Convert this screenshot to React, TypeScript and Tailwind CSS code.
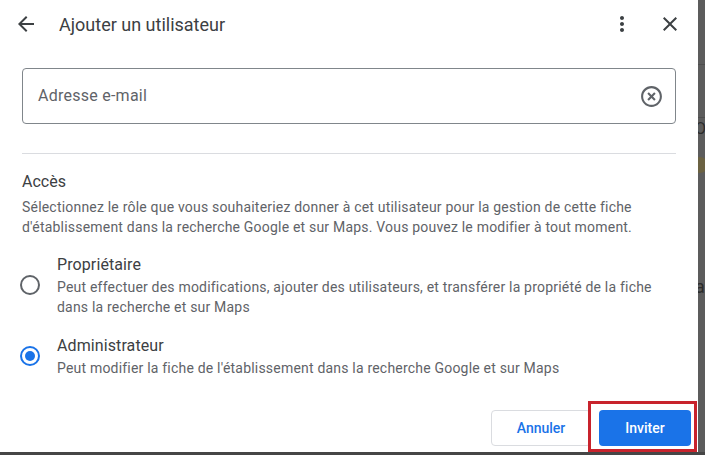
import React from "react";

const ArrowBack = () => (
  <svg width="24" height="24" viewBox="0 0 24 24" fill="#3c4043">
    <path d="M20 11H7.83l5.59-5.59L12 4l-8 8 8 8 1.41-1.41L7.83 13H20v-2z" />
  </svg>
);

const MoreVert = () => (
  <svg width="24" height="24" viewBox="0 0 24 24" fill="#3c4043">
    <path d="M12 8c1.1 0 2-.9 2-2s-.9-2-2-2-2 .9-2 2 .9 2 2 2zm0 2c-1.1 0-2 .9-2 2s.9 2 2 2 2-.9 2-2-.9-2-2-2zm0 6c-1.1 0-2 .9-2 2s.9 2 2 2 2-.9 2-2-.9-2-2-2z" />
  </svg>
);

const Close = () => (
  <svg width="24" height="24" viewBox="0 0 24 24" fill="#3c4043">
    <path d="M19 6.41 17.59 5 12 10.59 6.41 5 5 6.41 10.59 12 5 17.59 6.41 19 12 13.41 17.59 19 19 17.59 13.41 12z" />
  </svg>
);

const HighlightOff = () => (
  <svg width="25" height="25" viewBox="0 0 24 24" fill="#5f6368">
    <path d="M14.59 8 12 10.59 9.41 8 8 9.41 10.59 12 8 14.59 9.41 16 12 13.41 14.59 16 16 14.59 13.41 12 16 9.41 14.59 8zM12 2C6.47 2 2 6.47 2 12s4.47 10 10 10 10-4.47 10-10S17.53 2 12 2zm0 18c-4.41 0-8-3.59-8-8s3.59-8 8-8 8 3.59 8 8-3.59 8-8 8z" />
  </svg>
);

function Radio({ checked }: { checked: boolean }) {
  return checked ? (
    <div className="w-[20px] h-[20px] rounded-full border-2 border-[#1a73e8] flex items-center justify-center shrink-0">
      <div className="w-[10px] h-[10px] rounded-full bg-[#1a73e8]" />
    </div>
  ) : (
    <div className="w-[20px] h-[20px] rounded-full border-2 border-[#5f6368] shrink-0" />
  );
}

export default function App() {
  return (
    <div className="w-[705px] h-[455px] bg-[#5c5c5c] overflow-hidden flex flex-col font-['Roboto',sans-serif]">
      <div className="flex h-[452px]">
        <div className="relative w-[698px] h-[452px] bg-white flex flex-col shrink-0">
          {/* Header */}
          <div className="h-[48px] flex items-center pl-[14px] pr-[16px]">
            <ArrowBack />
            <div className="ml-[21px] flex-1 text-[18px] text-[#3c4043]">Ajouter un utilisateur</div>
            <MoreVert />
            <div className="ml-[24px]">
              <Close />
            </div>
          </div>

          {/* Input */}
          <div className="mt-[20px] mx-[22px] h-[56px] border border-[#80868b] rounded-[4px] flex items-center pl-[15px] pr-[11px]">
            <div className="flex-1 text-[16px] tracking-[0.25px] text-[#5f6368]">Adresse e-mail</div>
            <HighlightOff />
          </div>

          <div className="mt-[29px] mx-[22px] border-t border-[#dadce0]" />

          {/* Access */}
          <div className="mx-[22px] mt-[16px]">
            <div className="text-[16px] leading-6 text-[#3c4043]">Accès</div>
            <div className="mt-[3px] text-[14px] leading-5 tracking-[0.2px] text-[#5f6368]">
              Sélectionnez le rôle que vous souhaiteriez donner à cet utilisateur pour la gestion de cette fiche
              <br />
              d'établissement dans la recherche Google et sur Maps. Vous pouvez le modifier à tout moment.
            </div>
          </div>

          <div className="mt-[16px] ml-[20px] mr-[22px] flex items-center gap-[17px]">
            <Radio checked={false} />
            <div>
              <div className="text-[16px] leading-6 tracking-[0.1px] text-[#3c4043]">Propriétaire</div>
              <div className="text-[14px] leading-5 tracking-[0.2px] text-[#5f6368]">
                Peut effectuer des modifications, ajouter des utilisateurs, et transférer la propriété de la fiche
                <br />
                dans la recherche et sur Maps
              </div>
            </div>
          </div>

          <div className="mt-[17px] ml-[20px] mr-[22px] flex items-center gap-[17px]">
            <Radio checked={true} />
            <div>
              <div className="text-[16px] leading-6 tracking-[0.1px] text-[#3c4043]">Administrateur</div>
              <div className="text-[14px] leading-5 tracking-[0.2px] text-[#5f6368]">
                Peut modifier la fiche de l'établissement dans la recherche Google et sur Maps
              </div>
            </div>
          </div>

          {/* Buttons */}
          <div className="mt-auto pb-[6px] pr-[7px] flex justify-end gap-[8px]">
            <button className="w-[100px] h-[36px] border border-[#dadce0] rounded-[4px] text-[14px] font-medium text-[#1a73e8] bg-white">
              Annuler
            </button>
            <button className="w-[92px] h-[36px] rounded-[4px] text-[14px] font-medium text-white bg-[#1a73e8]">
              Inviter
            </button>
          </div>

          {/* red highlight annotation */}
          <div className="absolute left-[588px] top-[401px] w-[109px] h-[51px] border-[3px] border-[#c8232c]" />
        </div>

        {/* backdrop strip */}
        <div className="flex-1 flex flex-col bg-[#5c5c5c] overflow-hidden">
          <div className="mt-[64px] border-t border-[#4e4e4e]" />
          <div className="mt-[52px] border-t border-[#4e4e4e]" />
          <div className="mt-[1px] text-[16px] leading-5 text-[#2b2b2b] -ml-[3px]">O</div>
          <div className="mt-[18px] w-[16px] h-[16px] rounded-full bg-[#6b6242] -ml-[6px]" />
          <div className="mt-[104px] text-[18px] leading-5 text-[#2b2b2b] -ml-[3px]">a</div>
        </div>
      </div>
      <div className="h-[3px] bg-[#464646]" />
    </div>
  );
}
